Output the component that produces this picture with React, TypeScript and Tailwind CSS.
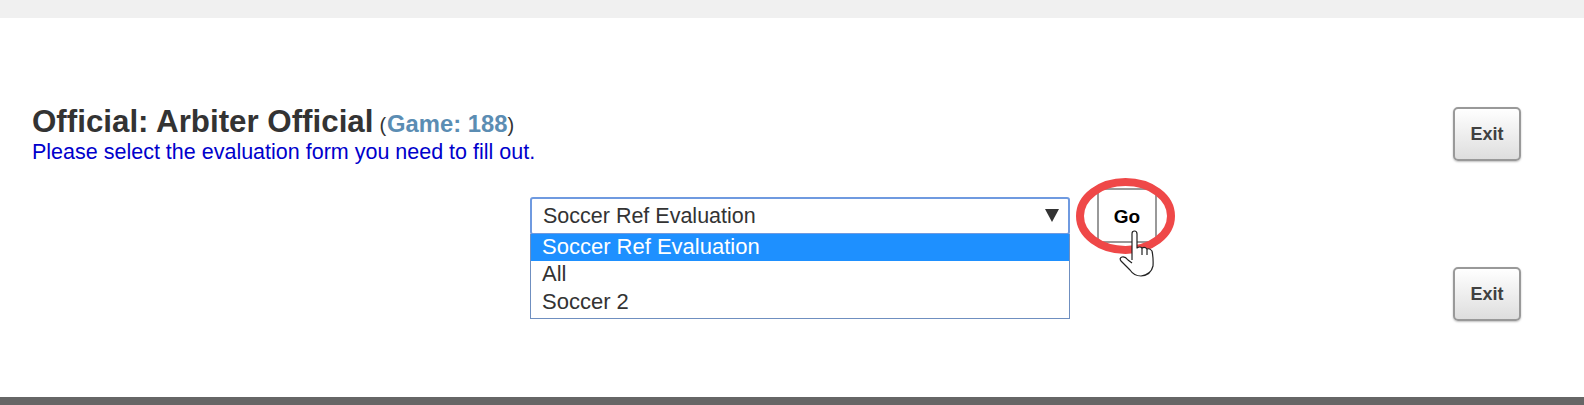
const exitClass =
  "w-[68px] h-[54px] rounded-[5px] border-2 border-[#999999] bg-gradient-to-b from-white to-[#dedede] shadow-[0_1px_2px_rgba(0,0,0,0.25)] text-[18px] font-bold text-[#404040]";

function HandCursor() {
  return (
    <svg className="absolute left-[22px] top-[42px]" width="36" height="47" viewBox="0 0 36 47">
      <path
        d="M13 30 L13 4 Q13 1 15.5 1 Q18 1 18 4 L18 18 Q21 16 23 18 Q26 16.500 28 19 Q31 18 33 21 Q34.500 28 34 36 Q32 45 22 46 Q15 46 11 40 L2 31 Q0 28 3 27 Q6 26 9 30 L13 33"
        fill="#ffffff"
        stroke="#222222"
        strokeWidth="1.2"
        strokeLinejoin="round"
      />
      <path d="M23 18 L23 25 M28 19 L28 25" fill="none" stroke="#222222" strokeWidth="1.2" />
    </svg>
  );
}

export default function App() {
  return (
    <div className="h-[405px] flex flex-col bg-white font-['Liberation_Sans',Arial,sans-serif] overflow-hidden">
      <div className="h-[18px] bg-[#f0f0f0]" />

      <div className="flex-1 pl-[32px] pr-[63px] pt-[89px]">
        <div className="flex items-start justify-between h-[54px]">
          <div>
            <div className="h-[31px] flex items-baseline text-[#333333]">
              <span className="text-[31.3px] font-bold leading-[30px]">Official: Arbiter Official</span>
              <span className="ml-[6px] text-[20px] leading-[30px]">
                (<span className="ml-[1px] text-[23.8px] font-bold text-[#5b8db3]">Game: 188</span>)
              </span>
            </div>
            <p className="mt-[2px] text-[21.5px] leading-[25px] text-[#0000cc]">
              Please select the evaluation form you need to fill out.
            </p>
          </div>
          <button className={exitClass}>Exit</button>
        </div>

        <div className="mt-[27px] ml-[498px] flex items-start h-[54px]">
          <div className="relative w-[540px] mt-[9px]">
            <div className="h-[38px] flex items-center justify-between pl-[11px] pr-[9px] border-2 border-[#6f9ae0] rounded-[3px] text-[21.5px] text-[#333333]">
              <span>Soccer Ref Evaluation</span>
              <svg width="14" height="13" viewBox="0 0 14 13" className="mb-[2px]">
                <path d="M0 0 H14 L7 13 Z" fill="#333333" />
              </svg>
            </div>
            <ul className="absolute left-0 right-0 top-[37px] border border-[#6f8fc0] border-t-0 bg-white text-[22px] text-[#333333]">
              <li className="h-[27px] leading-[26px] pl-[11px] bg-[#1e90ff] text-white">Soccer Ref Evaluation</li>
              <li className="h-[28px] leading-[25px] pl-[11px]">All</li>
              <li className="h-[29px] leading-[26px] pl-[11px]">Soccer 2</li>
            </ul>
          </div>
          <div className="relative ml-[27px]">
            <button className="w-[60px] h-[55px] pt-[3px] border-2 border-[#999999] bg-white text-[19px] font-bold text-black">
              Go
            </button>
            <svg className="absolute left-[-21px] top-[-10px]" width="100" height="77" viewBox="0 0 100 77">
              <ellipse cx="49.500" cy="38" rx="45.500" ry="34" fill="none" stroke="#ef4848" strokeWidth="8" />
            </svg>
            <HandCursor />
          </div>
        </div>

        <div className="mt-[25px] flex justify-end">
          <button className={exitClass}>Exit</button>
        </div>
      </div>

      <div className="h-[8px] bg-[#666666]" />
    </div>
  );
}
